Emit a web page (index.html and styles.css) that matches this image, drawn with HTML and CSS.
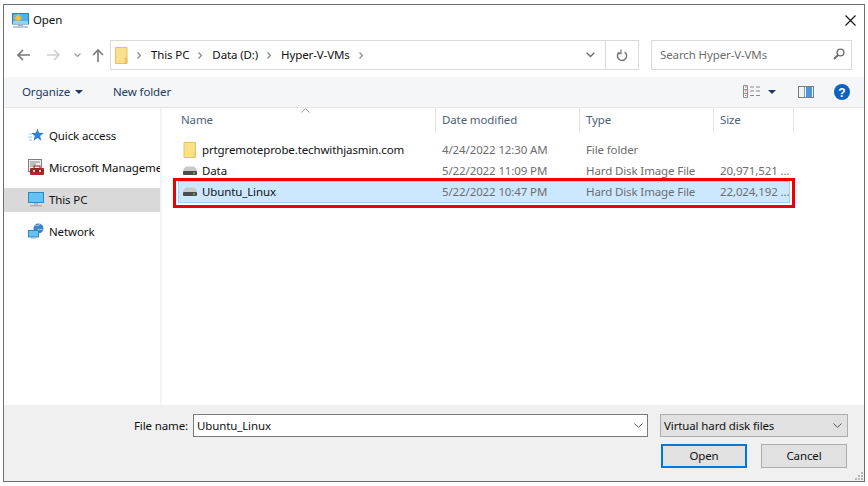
FILE: index.html
```html
<!DOCTYPE html>
<html lang="en">
<head>
<meta charset="utf-8">
<title>Open</title>
<link rel="stylesheet" href="styles.css">
</head>
<body>
<div class="dialog">
  <div class="titlebar">
    <svg class="app-icon" width="17" height="16" viewBox="0 0 17 16"><rect x="0.5" y="0.5" width="16" height="10.5" fill="#4fb3ea" stroke="#2c7fb8"/><rect x="1" y="8" width="15" height="3" fill="#8ed4f5"/><circle cx="6" cy="5" r="3" fill="#f4a62a"/><path d="M6 1v8M2 5h8M3.4 2.4l5.2 5.2M8.6 2.4l-5.2 5.2" stroke="#f7c64a" stroke-width="1"/><rect x="6" y="11" width="5" height="2" fill="#9fb4c4"/><rect x="1" y="13" width="15" height="2" fill="#b9c9d6"/></svg>
    <span class="title-text">Open</span>
    <svg class="close" width="11" height="11" viewBox="0 0 11 11"><path d="M0.5 0.5l10 10M10.5 0.5l-10 10" stroke="#111" stroke-width="1.1" fill="none"/></svg>
  </div>
  <div class="navrow">
    <div class="navbtns">
      <svg width="13" height="12" viewBox="0 0 13 12"><path d="M6 1L1 6l5 5M1 6h12" stroke="#7a7a7a" stroke-width="1.6" fill="none"/></svg>
      <svg class="nav-fwd" width="13" height="12" viewBox="0 0 13 12"><path d="M7 1l5 5-5 5M12 6H0" stroke="#d0d0d0" stroke-width="1.6" fill="none"/></svg>
      <svg class="nav-more" width="7" height="5" viewBox="0 0 7 5"><path d="M0.5 0.5L3.5 3.5 6.5 0.5" stroke="#9a9a9a" stroke-width="1.2" fill="none"/></svg>
      <svg class="nav-up" width="12" height="13" viewBox="0 0 12 13"><path d="M1 6l5-5 5 5M6 1v12" stroke="#7a7a7a" stroke-width="1.6" fill="none"/></svg>
    </div>
    <div class="address">
      <svg class="folder-sm" width="13" height="17" viewBox="0 0 13 17"><path d="M0.5 0.5h11.5v16H0.5z" fill="#fbe08c" stroke="#e6c35c"/><path d="M10 11h2v5.5h-2z" fill="#f0d070" stroke="#e0bb50" stroke-width="0.6"/></svg>
      <svg class="crumb-sep" width="4" height="7" viewBox="0 0 4 7"><path d="M0.5 0.5l3 3-3 3" stroke="#858585" stroke-width="1.2" fill="none"/></svg><span class="crumb">This PC</span>
      <svg class="crumb-sep" width="4" height="7" viewBox="0 0 4 7"><path d="M0.5 0.5l3 3-3 3" stroke="#858585" stroke-width="1.2" fill="none"/></svg><span class="crumb">Data (D:)</span>
      <svg class="crumb-sep" width="4" height="7" viewBox="0 0 4 7"><path d="M0.5 0.5l3 3-3 3" stroke="#858585" stroke-width="1.2" fill="none"/></svg><span class="crumb">Hyper-V-VMs</span>
      <svg class="crumb-sep" width="4" height="7" viewBox="0 0 4 7"><path d="M0.5 0.5l3 3-3 3" stroke="#858585" stroke-width="1.2" fill="none"/></svg>
      <span class="addr-spacer"></span>
      <svg class="addr-chev" width="9" height="6" viewBox="0 0 9 6"><path d="M0.7 0.7L4.5 4.5 8.3 0.7" stroke="#707070" stroke-width="1.4" fill="none"/></svg>
      <div class="addr-refresh">
        <svg width="12" height="13" viewBox="0 0 12 13"><path d="M3.2 3.2A4.6 4.6 0 1 0 8.6 3" stroke="#787878" stroke-width="1.5" fill="none"/><path d="M4 0.5v4H0.6" stroke="#787878" stroke-width="1.3" fill="none" transform="translate(1 0)"/></svg>
      </div>
    </div>
    <div class="search">
      <span>Search Hyper-V-VMs</span>
      <svg width="12" height="12" viewBox="0 0 12 12"><circle cx="7.5" cy="4.5" r="3.4" stroke="#6e6e6e" stroke-width="1.4" fill="none"/><path d="M5 7L1 11" stroke="#6e6e6e" stroke-width="1.9"/></svg>
    </div>
  </div>
  <div class="toolbar">
    <span class="tool tool-org">Organize</span>
    <span class="caret caret-org"></span>
    <span class="tool tool-new">New folder</span>
    <svg class="view-icon" width="17" height="13" viewBox="0 0 17 13"><path d="M0.5 0.5h4v12h-4zM0.5 4.5h4M0.5 8.5h4" stroke="#8a8a8a" fill="#fff"/><path d="M2 2h1.4M2 6h1.4M2 10.4h1.4" stroke="#c0504d"/><path d="M7 2h4M13 2h4M7 6h4M13 6h4M7 10.500h4M13 10.500h4" stroke="#8a8a8a"/></svg>
    <span class="caret caret-view"></span>
    <svg class="pane-icon" width="16" height="12" viewBox="0 0 16 12"><rect x="0.5" y="0.5" width="15" height="11" fill="#eef3f8" stroke="#7d7d7d"/><rect x="8" y="1" width="6" height="10" fill="#4a97e0"/><rect x="6" y="1" width="1" height="10" fill="#9a9a9a"/></svg>
    <svg class="help-icon" width="16" height="16" viewBox="0 0 16 16"><circle cx="8" cy="8" r="8" fill="#0d62c0"/><text x="8" y="12.500" text-anchor="middle" class="help-q">?</text></svg>
  </div>
  <div class="content">
    <nav class="sidebar">
      <div class="nav-item">
        <svg width="16" height="15" viewBox="0 0 16 15"><path d="M9.500 0.500l1.600 4.300 4.700.2-3.700 3 1.300 4.800-3.900-2.700-4 2.700 1.300-4.800L3.200 5l4.700-.2z" fill="#2f83d0"/><path d="M0.500 6h3M0 9h4M1 12h3" stroke="#9cc7ea"/></svg>
        <span>Quick access</span>
      </div>
      <div class="nav-item">
        <svg width="16" height="16" viewBox="0 0 16 16"><rect x="0.500" y="0.500" width="13" height="12" fill="#eee" stroke="#7f7f7f"/><path d="M2 3h10M2 5h6M2 7h5" stroke="#8a8a8a"/><rect x="2" y="9" width="14" height="7" rx="1" fill="#b3262b"/><rect x="6" y="7" width="6" height="2.500" fill="none" stroke="#8e1c20"/><path d="M2 12h14" stroke="#7e1417"/><rect x="5" y="11" width="2" height="2" fill="#eac6c6"/><rect x="11" y="11" width="2" height="2" fill="#eac6c6"/></svg>
        <span class="nav-clip">Microsoft Manageme</span>
      </div>
      <div class="nav-item selected">
        <svg width="16" height="15" viewBox="0 0 16 15"><rect x="0.500" y="0.500" width="15" height="10" fill="#66c2f2" stroke="#2f8ac4"/><rect x="6" y="11" width="4" height="2" fill="#a8bccb"/><rect x="2" y="13" width="12" height="1.500" fill="#9fb4c4"/></svg>
        <span>This PC</span>
      </div>
      <div class="nav-item">
        <svg width="16" height="16" viewBox="0 0 16 16"><circle cx="10.500" cy="5.500" r="5" fill="#3d84c6"/><path d="M7 2c2 1 4 .5 5-1M8 8c2-2 5-2 7-1" stroke="#a5d0ef" fill="none"/><rect x="0.500" y="7.500" width="10" height="6.500" fill="#66c2f2" stroke="#2f8ac4"/><rect x="3" y="14" width="5" height="1.500" fill="#9fb4c4"/></svg>
        <span>Network</span>
      </div>
    </nav>
    <div class="files">
      <svg class="sort" width="9" height="5" viewBox="0 0 9 5"><path d="M0.500 4.500L4.500 0.700 8.500 4.500" stroke="#9a9a9a" fill="none"/></svg>
      <div class="cols head">
        <span class="col-name">Name</span>
        <span class="col">Date modified</span>
        <span class="col">Type</span>
        <span class="col">Size</span>
      </div>
      <div class="rows">
        <div class="cols row">
          <span class="cell-name"><svg width="13" height="16" viewBox="0 0 13 16"><path d="M0.500 0.500h11.500v15H0.500z" fill="#fbe08c" stroke="#e6c35c"/><path d="M10 10h2v5.500h-2z" fill="#f0d070"/></svg><b>prtgremoteprobe.techwithjasmin.com</b></span>
          <span class="cell">4/24/2022 12:30 AM</span>
          <span class="cell">File folder</span>
          <span class="cell"></span>
        </div>
        <div class="cols row">
          <span class="cell-name"><svg class="disk" width="14" height="9" viewBox="0 0 14 9"><path d="M0 5.500C0 3 2 0.500 4 0.500h6c2 0 4 2.500 4 5z" fill="#c9c9c9"/><rect x="0" y="5" width="14" height="4" rx="1" fill="#4d4d4d"/><rect x="10" y="6.500" width="2" height="1.200" fill="#5fe05f"/></svg><b>Data</b></span>
          <span class="cell">5/22/2022 11:09 PM</span>
          <span class="cell">Hard Disk Image File</span>
          <span class="cell">20,971,521 ...</span>
        </div>
        <div class="cols row row-selected">
          <span class="cell-name"><svg class="disk" width="14" height="9" viewBox="0 0 14 9"><path d="M0 5.500C0 3 2 0.500 4 0.500h6c2 0 4 2.500 4 5z" fill="#c9c9c9"/><rect x="0" y="5" width="14" height="4" rx="1" fill="#4d4d4d"/><rect x="10" y="6.500" width="2" height="1.200" fill="#5fe05f"/></svg><b>Ubuntu_Linux</b></span>
          <span class="cell">5/22/2022 10:47 PM</span>
          <span class="cell">Hard Disk Image File</span>
          <span class="cell">22,024,192 ...</span>
          <span class="annotation"></span>
        </div>
      </div>
    </div>
  </div>
  <div class="footer">
    <div class="footer-row">
      <span class="fname-label">File name:</span>
      <div class="fname-input">
        <span>Ubuntu_Linux</span>
        <svg width="9" height="5" viewBox="0 0 9 5"><path d="M0.500 0.500L4.500 4.300 8.500 0.500" stroke="#555" fill="none"/></svg>
      </div>
      <div class="filetype">
        <span>Virtual hard disk files</span>
        <svg width="9" height="5" viewBox="0 0 9 5"><path d="M0.500 0.500L4.500 4.300 8.500 0.500" stroke="#555" fill="none"/></svg>
      </div>
    </div>
    <div class="footer-btns">
      <div class="btn btn-primary">Open</div>
      <div class="btn">Cancel</div>
    </div>
    <svg class="grip" width="8" height="8" viewBox="0 0 8 8"><path d="M6 0h2v2H6zM3 3h2v2H3zM6 3h2v2H6zM0 6h2v2H0zM3 6h2v2H3zM6 6h2v2H6z" fill="#b8b8b8"/></svg>
  </div>
</div>
</body>
</html>
```
FILE: styles.css
```css
* { box-sizing: border-box; }
html, body { margin: 0; padding: 0; background: #fff; }
body { width: 868px; height: 486px; overflow: hidden; font-family: "Noto Sans", "Open Sans", sans-serif; font-size: 11.5px; letter-spacing: -0.12px; color: #111; }
.dialog { width: 862px; height: 478px; margin: 4px 0 0 3px; border: 1px solid #6f6f6f; display: flex; flex-direction: column; background: #fff; }

.titlebar { height: 30px; flex: none; display: flex; align-items: center; padding: 0 8px; }
.app-icon { margin-right: 4px; margin-top: 1px; }
.title-text { flex: 1; margin-top: -1px; }

.navrow { height: 42px; flex: none; display: flex; align-items: flex-start; padding: 5px 11px 0 0; }
.navbtns { width: 106px; height: 30px; display: flex; align-items: center; padding-left: 13px; flex: none; }
.nav-fwd { margin-left: 17px; }
.nav-more { margin-left: 14px; }
.nav-up { margin-left: 11px; }
.address { width: 529px; height: 30px; border: 1px solid #d9d9d9; display: flex; align-items: center; padding-left: 4px; flex: none; }
.folder-sm { margin-right: 9px; }
.crumb-sep { flex: none; }
.crumb { margin: 0 9px 0 10px; position: relative; top: -1px; }
.addr-spacer { flex: 1; }
.addr-chev { margin-right: 10px; }
.addr-refresh { width: 33px; height: 28px; border-left: 1px solid #d9d9d9; display: flex; align-items: center; justify-content: center; }
.search { width: 201px; height: 30px; margin-left: 12px; border: 1px solid #d9d9d9; display: flex; align-items: center; justify-content: space-between; padding: 0 6px 2px 8px; color: #6d6d6d; }

.toolbar { height: 31px; flex: none; display: flex; align-items: center; background: #f5f6f7; border-bottom: 1px solid #e5e5e5; padding-bottom: 1px; }
.tool { color: #1c3a5e; }
.tool-org { margin-left: 18px; width: 53px; }
.caret { flex: none; width: 0; height: 0; border-left: 4px solid transparent; border-right: 4px solid transparent; border-top: 4px solid #1f3a5f; }
.tool-new { margin-left: 30px; flex: 1; }
.caret-view { margin-left: 8px; }
.pane-icon { margin-left: 22px; }
.help-icon { margin-left: 20px; margin-right: 14px; }
.help-q { font-family: "Liberation Sans", sans-serif; font-weight: 700; font-size: 12px; fill: #fff; letter-spacing: 0; }

.content { flex: 1; min-height: 0; display: flex; }
.sidebar { width: 158px; flex: none; padding-top: 16px; border-right: 2px solid #f4f4f4; }
.nav-item { width: 156px; height: 24px; margin-bottom: 8px; padding-bottom: 2px; display: flex; align-items: center; white-space: nowrap; overflow: hidden; }
.nav-item svg { flex: none; margin-left: 24px; margin-right: 5px; }
.nav-clip { min-width: 0; overflow: hidden; }
.nav-item.selected { background: #d9d9d9; }

.files { flex: 1; min-width: 0; position: relative; }
.sort { position: absolute; left: 139px; top: 0; }
.cols { display: grid; grid-template-columns: 258px 144px 134px 80px; }
.head { height: 25px; align-items: center; color: #4c607a; margin-left: 16px; width: 616px; }
.col-name { padding-left: 3px; height: 25px; line-height: 24px; border-right: 1px solid #e5e5e5; }
.col { padding-left: 6px; height: 25px; line-height: 24px; border-right: 1px solid #e5e5e5; }
.rows { padding-top: 6px; margin-left: 16px; }
.row { height: 21px; width: 612px; align-items: center; color: #6d6d6d; position: relative; border: 1px solid transparent; }
.row-selected { background: #cce8ff; border-color: #99d1ff; height: 22px; padding-bottom: 2px; }
.cell { padding-left: 5px; white-space: nowrap; }
.cell-name { display: flex; align-items: center; color: #111; padding-left: 4px; }
.cell-name svg { width: 14px; flex: none; margin-right: 5px; }
.cell-name b { font-weight: 400; white-space: nowrap; }
.annotation { position: absolute; left: -6px; right: -6px; top: -4px; bottom: -6px; border: 3px solid #ee0000; pointer-events: none; }

.footer { height: 76px; flex: none; background: #f0f0f0; padding: 9px 16px 0 130px; position: relative; }
.footer-row { display: flex; align-items: center; height: 23px; }
.fname-label { width: 59px; flex: none; }
.fname-input { width: 455px; height: 23px; background: #fff; border: 1px solid #7a7a7a; display: flex; align-items: center; justify-content: space-between; padding: 0 4px 0 3px; }
.filetype { width: 188px; height: 23px; margin-left: 12px; background: #e1e1e1; border: 1px solid #adadad; display: flex; align-items: center; justify-content: space-between; padding: 0 5px 0 3px; }
.footer-btns { display: flex; justify-content: flex-end; margin-top: 7px; margin-right: 1px; gap: 14px; }
.btn { width: 86px; height: 24px; background: #e1e1e1; border: 1px solid #adadad; text-align: center; line-height: 22px; }
.btn-primary { border: 2px solid #0078d7; line-height: 20px; }
.grip { position: absolute; right: 1px; bottom: 1px; }
```
